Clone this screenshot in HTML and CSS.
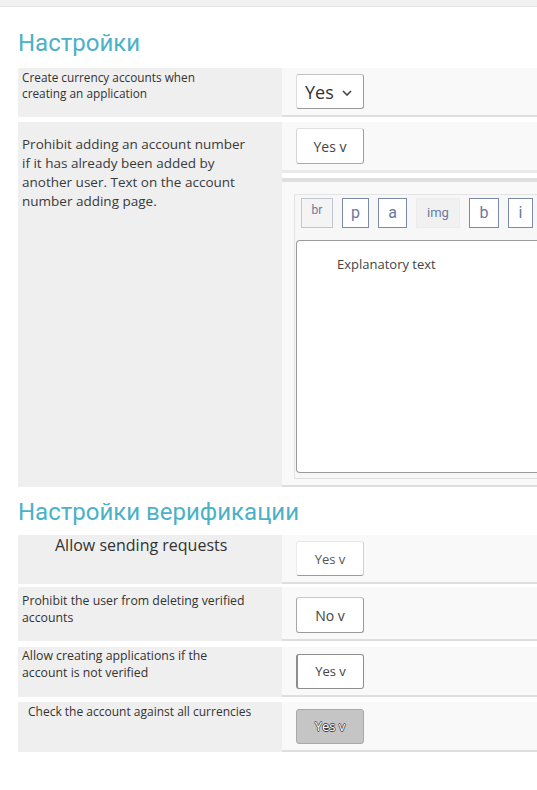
FILE: index.html
```html
<!DOCTYPE html>
<html lang="ru">
<head>
<meta charset="utf-8">
<title>Настройки</title>
<link rel="stylesheet" href="styles.css">
</head>
<body>
<div class="topbar"></div>
<main class="page">
  <h2 class="section-title">Настройки</h2>
  <div class="row row-1">
    <div class="label label-xs w-180">Create currency accounts when creating an application</div>
    <div class="value">
      <div class="select select-lg">Yes <svg class="chev" width="10" height="6" viewBox="0 0 10 6"><path d="M1 1 L5 5 L9 1" fill="none" stroke="#444" stroke-width="1.6"/></svg></div>
    </div>
  </div>
  <div class="row row-span">
    <div class="label label-md w-240">Prohibit adding an account number if it has already been added by another user. Text on the account number adding page.</div>
    <div class="value-stack">
      <div class="value value-top">
        <div class="select select-md">Yes v</div>
      </div>
      <div class="value value-editor">
        <div class="editor">
          <div class="toolbar">
            <span class="tb tb-faint tb-br">br</span>
            <span class="tb tb-p">p</span>
            <span class="tb tb-a">a</span>
            <span class="tb tb-none tb-img">img</span>
            <span class="tb tb-b">b</span>
            <span class="tb tb-i">i</span>
            <span class="tb tb-more"></span>
          </div>
          <div class="textarea">Explanatory text</div>
        </div>
      </div>
    </div>
  </div>

  <h2 class="section-title section-title-2">Настройки верификации</h2>
  <div class="row row-a">
    <div class="label label-lg">Allow sending requests</div>
    <div class="value">
      <div class="select select-sm select-soft">Yes v</div>
    </div>
  </div>
  <div class="row row-b">
    <div class="label label-s w-235">Prohibit the user from deleting verified accounts</div>
    <div class="value value-low">
      <div class="select select-md">No v</div>
    </div>
  </div>
  <div class="row row-c">
    <div class="label label-s w-200">Allow creating applications if the account is not verified</div>
    <div class="value">
      <div class="select select-sm select-dark">Yes v</div>
    </div>
  </div>
  <div class="row row-d">
    <div class="label label-s label-d">Check the account against all currencies</div>
    <div class="value">
      <div class="select select-sm select-gray">Yes v</div>
    </div>
  </div>
</main>
</body>
</html>
```

FILE: styles.css
```css
* { box-sizing: border-box; }

html, body {
  margin: 0;
  padding: 0;
  background: #ffffff;
}

body {
  font-family: "Open Sans", "Liberation Sans", sans-serif;
  color: #333;
  overflow: hidden;
}

.topbar {
  height: 7px;
  background: #f1f1f1;
  border-bottom: 1px solid #e4e4e4;
}

.page {
  padding-left: 18px;
}

.section-title {
  margin: 22px 0 11px;
  font-family: Roboto, "Liberation Sans", sans-serif;
  font-weight: 400;
  font-size: 24px;
  line-height: 28px;
  color: #4bb1c7;
}

.section-title-2 {
  margin: 11px 0 9px;
}

.row {
  display: grid;
  grid-template-columns: 264px 1fr;
}

.row-span { overflow: hidden; }

.row + .row { margin-top: 5px; }
.row-b { margin-top: 3px !important; }
.row-c { margin-top: 6px !important; }

.label {
  background: #efefef;
  padding-left: 4px;
  color: #333;
}

.label-xs { font-size: 11.8px; line-height: 16px; padding-top: 1px; }
.label-md { font-size: 13.5px; line-height: 19px; padding-top: 13px; color: #3a3a3a; }
.label-lg { font-size: 16px; line-height: 20px; padding-left: 37px; padding-top: 0; }
.label-s  { font-size: 12.3px; line-height: 17px; }
.row-b .label { padding-top: 5px; }
.row-c .label { padding-top: 0; }
.label-d { padding-left: 10px; padding-top: 1px; font-size: 12px; }

.w-180 { padding-right: 70px; }
.w-240 { padding-right: 26px; }
.w-235 { padding-right: 14px; }
.w-200 { padding-right: 40px; }

.value {
  background: #f9f9f9;
  border-bottom: 2px solid #dedede;
  display: flex;
  align-items: center;
  padding-left: 14px;
  height: 49px;
}

.row-b .value { height: 54px; align-items: flex-start; padding-top: 10px; }
.row-c .value { height: 50px; }
.row-d .value { height: 50px; }

.value-stack {
  display: flex;
  flex-direction: column;
}

.value-top {
  height: 51px;
  border-bottom: 3px solid #e9e9e9;
}

.value-editor {
  margin-top: 5px;
  border-top: 4px solid #dfdfdf;
  height: 309px;
  align-items: flex-start;
  padding: 12px 0 0 12px;
}

.select {
  width: 68px;
  height: 36px;
  background: #fff;
  border: 1px solid #b9b9b9;
  border-radius: 3px;
  display: flex;
  align-items: center;
  justify-content: center;
  color: #444;
}

.select-lg {
  height: 35px;
  font-size: 18px;
  color: #333;
  justify-content: flex-start;
  padding-left: 8px;
  gap: 8px;
  border-color: #c2c2c2 #9a9a9a #9a9a9a #dcdcdc;
}

.select-lg .chev { margin-top: 2px; }

.select-md { font-size: 14px; border-color: #e0e0e0 #9d9d9d #a8a8a8 #d6d6d6; }
.row-b .select-md { border-color: #c9c9c9 #9a9a9a #9a9a9a #a7a7a7; }

.select-sm { font-size: 13px; height: 35px; }

.select-soft {
  color: #555;
  border-color: #e6e6e6 #cfcfcf #9b9b9b #ececec;
}

.select-dark { border-color: #8d8d8d; border-width: 1px 1px 1px 2px; }

.select-gray {
  background: #c5c5c5;
  border-color: #a9a9a9;
  color: #fff;
  text-shadow: 0.7px 0 #444, -0.7px 0 #444, 0 0.7px #444, 0 -0.7px #444;
}

.editor {
  width: 260px;
  height: 285px;
  background: #f7f7f7;
  border-top: 1px solid #e4e4e4;
  border-left: 1px solid #e4e4e4;
  border-bottom: 1px solid #e0e0e0;
  display: flex;
  flex-direction: column;
}

.toolbar {
  display: flex;
  align-items: center;
  gap: 9px;
  height: 45px;
  padding: 0 0 9px 6px;
  flex: none;
}

.tb {
  flex: none;
  height: 30px;
  border: 1px solid #7b89aa;
  background: #fff;
  color: #6a79a0;
  font-family: Roboto, "Liberation Sans", sans-serif;
  font-size: 16px;
  display: flex;
  align-items: center;
  justify-content: center;
  padding-bottom: 2px;
}

.tb-br { width: 32px; font-size: 12px; padding-bottom: 6px; }
.tb-p { width: 27px; }
.tb-a { width: 29px; }
.tb-img { width: 44px; font-size: 13px; }
.tb-b { width: 30px; }
.tb-i { width: 25px; }
.tb-more { width: 20px; }

.tb-faint { border-color: #c3c7d1; background: #f4f4f4; }
.tb-none { border-color: #ececec; background: #f1f1f1; }

.textarea {
  margin-left: 1px;
  height: 233px;
  background: #fff;
  border: 1px solid #9b9b9b;
  border-right: none;
  border-radius: 4px 0 0 4px;
  padding: 14px 0 0 40px;
  font-size: 13px;
  line-height: 18px;
  color: #444;
}
```
